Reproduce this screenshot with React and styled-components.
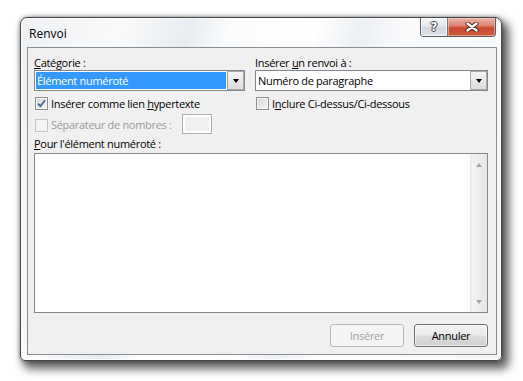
import React from 'react';
import styled, { createGlobalStyle } from 'styled-components';

const GlobalStyle = createGlobalStyle`
  html, body { margin: 0; padding: 0; background: #fff; }
  body { font-family: "Open Sans", "Noto Sans", sans-serif; font-size: 11px; letter-spacing: -0.3px; color: #000; }
`;

const Page = styled.div`
  width: 523px;
  height: 381px;
  padding: 17px 0 0 20px;
  box-sizing: border-box;
`;

const Window = styled.div`
  width: 482px;
  height: 344px;
  box-sizing: border-box;
  border: 1px solid #454545;
  border-radius: 7px 7px 5px 5px;
  background: linear-gradient(105deg, #eef1f4 0%, #f9fafb 18%, #e8ecf0 30%, #fbfcfd 37%, #ffffff 52%, #eceff3 60%, #fafbfc 68%, #f4f6f8 100%);
  box-shadow: inset 0 0 0 1px rgba(255,255,255,0.85), 0 0 4px rgba(0,0,0,0.4), 5px 6px 10px 2px rgba(0,0,0,0.62);
  display: flex;
  flex-direction: column;
  padding: 0 4px 5px 6px;
`;

const TitleBar = styled.div`
  height: 29px;
  display: flex;
  justify-content: space-between;
  align-items: flex-start;
  flex-shrink: 0;
`;

const Title = styled.div`
  font-size: 12px;
  letter-spacing: 0;
  line-height: 15px;
  margin: 8px 0 0 2px;
  color: #000;
`;

const Caption = styled.div`
  display: flex;
  height: 18px;
  border: 1px solid rgba(40,40,40,0.75);
  border-top: none;
  border-radius: 0 0 4px 4px;
  overflow: hidden;
  margin-right: 1px;
`;

const HelpBtn = styled.div`
  width: 26px;
  display: flex;
  align-items: center;
  justify-content: center;
  background: linear-gradient(#f3f5f8 0%, #e4e8ed 45%, #d2d7de 55%, #dfe3e8 100%);
  border-right: 1px solid rgba(40,40,40,0.6);
  box-shadow: inset 0 0 0 1px rgba(255,255,255,0.7);
  font-family: "DejaVu Sans", sans-serif;
  font-weight: bold;
  font-size: 12px;
  letter-spacing: 0;
  color: #fff;
  text-shadow: -1px 0 #444, 1px 0 #444, 0 -1px #444, 0 1px #444;
`;

const CloseBtn = styled.div`
  width: 47px;
  display: flex;
  align-items: center;
  justify-content: center;
  background: linear-gradient(#eab3a6 0%, #de8a78 40%, #c94a33 55%, #cf5a3f 100%);
  box-shadow: inset 0 0 0 1px rgba(255,220,210,0.5);
`;

const Client = styled.div`
  flex: 1;
  border: 1px solid #8a8d93;
  background: #f0f0f0;
  padding: 7px 8px 7px 6px;
  display: flex;
  flex-direction: column;
`;

const Columns = styled.div`
  display: grid;
  grid-template-columns: 211px 233px;
  column-gap: 10px;
`;

const Column = styled.div`
  display: flex;
  flex-direction: column;
`;

const FieldLabel = styled.div`
  line-height: 15px;
  height: 15px;
  margin-top: ${p => p.$top || 0}px;
  white-space: nowrap;
`;

const Key = styled.u`
  text-underline-offset: 1px;
`;

const Combo = styled.div`
  height: 21px;
  box-sizing: border-box;
  border: 1px solid #828790;
  background: #fff;
  display: flex;
`;

const ComboText = styled.div`
  flex: 1;
  margin: 1px;
  padding-left: 1px;
  display: flex;
  align-items: center;
  line-height: 15px;
  white-space: nowrap;
  background: ${p => (p.$selected ? '#3399ff' : 'transparent')};
  color: ${p => (p.$selected ? '#fff' : '#000')};
`;

const DropBtn = styled.div`
  width: 17px;
  box-sizing: border-box;
  border: 1px solid #a7a9ad;
  background: linear-gradient(#f4f4f4, #dcdcdc);
  display: flex;
  align-items: center;
  justify-content: center;
`;

const Arrow = styled.div`
  width: 0;
  height: 0;
  border-left: ${p => p.$size || 3.5}px solid transparent;
  border-right: ${p => p.$size || 3.5}px solid transparent;
  border-top: ${p => (p.$up ? 'none' : `${p.$h || 4}px solid ${p.$color || '#000'}`)};
  border-bottom: ${p => (p.$up ? `${p.$h || 4}px solid ${p.$color || '#000'}` : 'none')};
`;

const CheckRow = styled.label`
  display: flex;
  align-items: center;
  height: ${p => p.$h || 20}px;
  margin-top: ${p => p.$top || 0}px;
  gap: 3px;
  white-space: nowrap;
  color: ${p => (p.$disabled ? '#9b9b9b' : '#000')};
`;

const Box = styled.span`
  width: 13px;
  height: 13px;
  box-sizing: border-box;
  margin-left: 1px;
  margin-top: ${p => p.$drop || 0}px;
  border: 1px solid ${p => (p.$disabled ? '#c4c4c4' : '#8e8f8f')};
  background: ${p => (p.$disabled ? '#f4f4f4' : 'linear-gradient(135deg, #d2d5da, #f7f7f7)')};
  box-shadow: inset 0 0 0 1px #f4f4f4;
  display: flex;
  align-items: center;
  justify-content: center;
`;

const SmallInput = styled.div`
  width: 30px;
  height: 20px;
  box-sizing: border-box;
  margin-left: 7px;
  border: 1px solid #adadad;
  box-shadow: inset 0 0 0 2px #fff;
  background: #f0f0f0;
`;

const ListBox = styled.div`
  height: 160px;
  margin-top: 2px;
  box-sizing: border-box;
  border: 1px solid #828790;
  background: #fff;
  display: flex;
  justify-content: flex-end;
`;

const ScrollBar = styled.div`
  width: 17px;
  background: linear-gradient(90deg, #e3e3e3 0%, #f4f4f4 12%, #ececec 60%, #e6e6e6 100%);
  display: flex;
  flex-direction: column;
  justify-content: space-between;
  align-items: center;
  padding: 9px 0 8px;
  box-sizing: border-box;
`;

const ButtonRow = styled.div`
  display: flex;
  justify-content: flex-end;
  gap: 10px;
  margin-top: 11px;
`;

const PushButton = styled.div`
  width: 74px;
  height: 23px;
  box-sizing: border-box;
  border: 1px solid ${p => (p.$disabled ? '#b5b9bd' : '#707070')};
  border-radius: 3px;
  background: ${p => (p.$disabled ? '#f4f4f4' : 'linear-gradient(#f2f2f2 0%, #ebebeb 48%, #dddddd 52%, #cfcfcf 100%)')};
  box-shadow: ${p => (p.$disabled ? 'none' : 'inset 0 0 0 1px rgba(255,255,255,0.6)')};
  color: ${p => (p.$disabled ? '#a0a0a0' : '#000')};
  display: flex;
  align-items: center;
  justify-content: center;
`;

const Check = () => (
  <svg width="9" height="9" viewBox="0 0 9 9">
    <path d="M1 4.6 L3.4 7.2 L8 1.2" fill="none" stroke="#4a5f97" strokeWidth="1.8" />
  </svg>
);

const CloseX = () => (
  <svg width="14" height="10" viewBox="0 0 14 10">
    <path d="M2.5 1.5 L11.5 8.5 M11.5 1.5 L2.5 8.5" stroke="#5a2318" strokeWidth="4.2" strokeLinecap="round" />
    <path d="M2.5 1.5 L11.5 8.5 M11.5 1.5 L2.5 8.5" stroke="#fff" strokeWidth="2.4" strokeLinecap="round" />
  </svg>
);

export default function App() {
  return (
    <>
      <GlobalStyle />
      <Page>
        <Window>
          <TitleBar>
            <Title>Renvoi</Title>
            <Caption>
              <HelpBtn>?</HelpBtn>
              <CloseBtn><CloseX /></CloseBtn>
            </Caption>
          </TitleBar>
          <Client>
            <Columns>
              <Column>
                <FieldLabel><Key>C</Key>atégorie :</FieldLabel>
                <Combo>
                  <ComboText $selected>Élément numéroté</ComboText>
                  <DropBtn><Arrow /></DropBtn>
                </Combo>
                <CheckRow $top={2}>
                  <Box><Check /></Box>
                  <span>Insérer comme lien <Key>h</Key>ypertexte</span>
                </CheckRow>
                <CheckRow $h={22} $disabled>
                  <Box $disabled $drop={2} />
                  <span>Séparateur de nombres :</span>
                  <SmallInput />
                </CheckRow>
              </Column>
              <Column>
                <FieldLabel>Insérer <Key>u</Key>n renvoi à :</FieldLabel>
                <Combo>
                  <ComboText>Numéro de paragraphe</ComboText>
                  <DropBtn><Arrow /></DropBtn>
                </Combo>
                <CheckRow $top={2}>
                  <Box />
                  <span>I<Key>n</Key>clure Ci-dessus/Ci-dessous</span>
                </CheckRow>
              </Column>
            </Columns>
            <FieldLabel $top={1}><Key>P</Key>our l'élément numéroté :</FieldLabel>
            <ListBox>
              <ScrollBar>
                <Arrow $up $size={3.5} $h={4} $color="#a3a3a3" />
                <Arrow $size={3.5} $h={4} $color="#a3a3a3" />
              </ScrollBar>
            </ListBox>
            <ButtonRow>
              <PushButton $disabled>Insérer</PushButton>
              <PushButton>Annuler</PushButton>
            </ButtonRow>
          </Client>
        </Window>
      </Page>
    </>
  );
}
